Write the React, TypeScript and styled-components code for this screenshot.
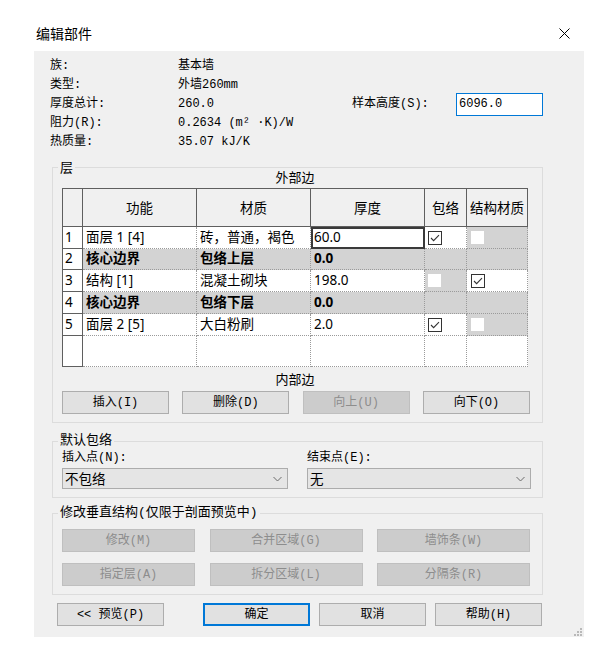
import React from "react";
import styled, { createGlobalStyle, css } from "styled-components";

const SONG = `"Liberation Mono", "Noto Sans CJK SC", monospace`;
const UI = `"Noto Sans", "Noto Sans CJK SC", sans-serif`;
const HEI = `"Noto Sans CJK SC", sans-serif`;

const GlobalStyle = createGlobalStyle`
  html, body {
    margin: 0;
    padding: 0;
    background: #fff;
  }
  body {
    font-family: ${HEI};
    color: #000;
  }
`;

type CheckState = "on" | "off";

interface Layer {
  n: number;
  fn: string;
  mat: string;
  thick: string;
  core?: boolean;
  wrap?: CheckState;
  struct?: CheckState;
  selected?: boolean;
}

const layers: Layer[] = [
  { n: 1, fn: "面层 1 [4]", mat: "砖，普通，褐色", thick: "60.0", wrap: "on", struct: "off", selected: true },
  { n: 2, fn: "核心边界", mat: "包络上层", thick: "0.0", core: true },
  { n: 3, fn: "结构 [1]", mat: "混凝土砌块", thick: "198.0", wrap: "off", struct: "on" },
  { n: 4, fn: "核心边界", mat: "包络下层", thick: "0.0", core: true },
  { n: 5, fn: "面层 2 [5]", mat: "大白粉刷", thick: "2.0", wrap: "on", struct: "off" },
];

const info = [
  { label: "族:", value: "基本墙" },
  { label: "类型:", value: "外墙260mm" },
  { label: "厚度总计:", value: "260.0", side: "样本高度(S):" },
  { label: "阻力(R):", value: "0.2634 (m² ·K)/W" },
  { label: "热质量:", value: "35.07 kJ/K" },
];

const Window = styled.div`
  width: 594px;
  height: 645px;
  background: #fff;
`;

const TitleBar = styled.div`
  height: 51px;
  box-sizing: border-box;
  display: flex;
  align-items: flex-end;
  justify-content: space-between;
  padding: 0 24px 9px 36px;
`;

const Title = styled.div`
  font: 14px/18px ${HEI};
`;

const CloseIcon = styled.svg`
  width: 11px;
  height: 11px;
  margin-bottom: 3px;
`;

const Panel = styled.div`
  position: relative;
  margin-left: 34px;
  width: 550px;
  height: 586px;
  box-sizing: border-box;
  background: #f0f0f0;
  padding: 6px 41px 0 18px;
  display: flex;
  flex-direction: column;
`;

const InfoGrid = styled.div`
  margin-left: -2px;
  display: grid;
  grid-template-columns: 128px 174px 104px 87px;
  grid-auto-rows: 19px;
  align-items: center;
  font: 12px/19px ${SONG};
`;

const InfoLabel = styled.div`
  grid-column: 1;
`;

const SideLabel = styled.div`
  grid-column: 3;
`;

const HeightField = styled.div`
  grid-column: 4;
  height: 23px;
  margin: -2px 0;
  box-sizing: border-box;
  border: 1px solid #0078d7;
  background: #fff;
  padding-left: 2px;
  line-height: 21px;
`;

const Group = styled.fieldset<{ $top: number }>`
  margin: ${(p) => p.$top}px 0 0;
  padding: 0;
  min-width: 0;
  border: 1px solid #dcdcdc;
`;

const Legend = styled.legend<{ $song?: boolean }>`
  margin-left: 5px;
  padding: 0 2px;
  font: ${(p) => (p.$song ? `13px/14px ${SONG}` : `13px/14px ${HEI}`)};
`;

const GroupBody = styled.div`
  padding: 0 0 8px 9px;
`;

const EdgeLabel = styled.div<{ $top: number }>`
  margin-top: ${(p) => p.$top}px;
  width: 466px;
  text-align: center;
  font: 13px/16px ${HEI};
`;

const Grid = styled.div`
  margin-top: 3px;
  width: 466px;
  box-sizing: border-box;
  display: grid;
  grid-template-columns: 20px 114px 114px 114px 42px 61px;
  grid-template-rows: 38px 22px 21px 22px 22px 22px 31px;
  border-top: 1px solid #5f5f5f;
  border-left: 1px solid #5f5f5f;
  background: #fff;
`;

const HeadCell = styled.div`
  box-sizing: border-box;
  background: #f0f0f0;
  border-right: 1px solid #5f5f5f;
  border-bottom: 1px solid #5f5f5f;
  display: flex;
  align-items: center;
  justify-content: center;
  font: 13.5px/1 ${HEI};
  white-space: nowrap;
`;

const RowHead = styled.div`
  box-sizing: border-box;
  background: #fff;
  border-right: 1px solid #5f5f5f;
  border-bottom: 1px solid #5f5f5f;
  display: flex;
  align-items: center;
  padding-left: 2px;
  font: 13.5px/1 ${UI};
`;

const Cell = styled.div<{ $gray?: boolean; $bold?: boolean; $selected?: boolean; $pad?: number }>`
  box-sizing: border-box;
  background: ${(p) => (p.$gray ? "#d3d3d3" : "#fff")};
  border-right: 1px dotted #9a9a9a;
  border-bottom: 1px dotted #9a9a9a;
  display: flex;
  align-items: center;
  padding-left: ${(p) => p.$pad ?? 3}px;
  font: ${(p) => (p.$bold ? 700 : 400)} 13.5px/1 ${UI};
  white-space: nowrap;
  overflow: hidden;
  ${(p) =>
    p.$selected &&
    css`
      outline: 2px solid #3a3a3a;
      outline-offset: -2px;
    `}
`;

const Box = styled.span<{ $on: boolean }>`
  box-sizing: border-box;
  width: ${(p) => (p.$on ? 14 : 13)}px;
  height: ${(p) => (p.$on ? 14 : 13)}px;
  background: #fff;
  border: ${(p) => (p.$on ? "1px solid #333" : "none")};
  display: flex;
  align-items: center;
  justify-content: center;
`;

const ButtonRow = styled.div`
  margin-top: 4px;
  width: 468px;
  display: flex;
  justify-content: space-between;
`;

const Button = styled.button<{ $w: number; $disabled?: boolean; $primary?: boolean }>`
  width: ${(p) => p.$w}px;
  height: 23px;
  box-sizing: border-box;
  margin: 0;
  padding: 0;
  border: 1px solid #adadad;
  background: #e1e1e1;
  color: #000;
  font: 12px/1 ${SONG};
  display: flex;
  align-items: center;
  justify-content: center;
  white-space: nowrap;
  ${(p) =>
    p.$disabled &&
    css`
      background: #cccccc;
      border-color: #bfbfbf;
      color: #8d8d8d;
    `}
  ${(p) =>
    p.$primary &&
    css`
      border-color: #0078d7;
      box-shadow: inset 0 0 0 1px #0078d7;
    `}
`;

const PickGrid = styled.div`
  display: grid;
  grid-template-columns: 226px 224px;
  column-gap: 19px;
`;

const PickLabel = styled.div`
  margin-top: 2px;
  font: 12px/16px ${SONG};
`;

const Select = styled.div`
  margin-top: 2px;
  height: 21px;
  box-sizing: border-box;
  border: 1px solid #acacac;
  background: #e5e5e5;
  display: flex;
  align-items: center;
  justify-content: space-between;
  padding: 0 5px 0 2px;
  font: 13.5px/1 ${HEI};
`;

const ToolGrid = styled.div`
  margin-top: 9px;
  display: grid;
  grid-template-columns: 133px 153px 153px;
  column-gap: 14.5px;
  row-gap: 11px;
`;

const Footer = styled.div`
  margin: 8px 1px 0 5px;
  display: flex;
  justify-content: space-between;
`;

const FooterRight = styled.div`
  display: flex;
  gap: 9px;
`;

const Grip = styled.svg`
  position: absolute;
  right: 2px;
  bottom: 1px;
  width: 10px;
  height: 10px;
`;

function Checkbox({ state }: { state: CheckState }) {
  return (
    <Box $on={state === "on"}>
      {state === "on" && (
        <svg width="12" height="12" viewBox="0 0 12 12">
          <polyline points="2,6 4.6,8.6 10,3.2" fill="none" stroke="#333" strokeWidth="1.1" />
        </svg>
      )}
    </Box>
  );
}

function Chevron() {
  return (
    <svg width="9" height="6" viewBox="0 0 9 6">
      <polyline points="0.5,1 4.5,5 8.5,1" fill="none" stroke="#6a6a6a" strokeWidth="1" />
    </svg>
  );
}

export default function App() {
  return (
    <Window>
      <GlobalStyle />
      <TitleBar>
        <Title>编辑部件</Title>
        <CloseIcon viewBox="0 0 11 11">
          <path d="M0.5 0.5 L10.5 10.5 M10.5 0.5 L0.5 10.5" stroke="#000" strokeWidth="1" />
        </CloseIcon>
      </TitleBar>

      <Panel>
        <InfoGrid>
          {info.map((row) => (
            <React.Fragment key={row.label}>
              <InfoLabel>{row.label}</InfoLabel>
              <div>{row.value}</div>
              {row.side && (
                <>
                  <SideLabel>{row.side}</SideLabel>
                  <HeightField>6096.0</HeightField>
                </>
              )}
            </React.Fragment>
          ))}
        </InfoGrid>

        <Group $top={8}>
          <Legend>层</Legend>
          <GroupBody>
            <EdgeLabel $top={-5}>外部边</EdgeLabel>
            <Grid>
              <HeadCell />
              <HeadCell>功能</HeadCell>
              <HeadCell>材质</HeadCell>
              <HeadCell>厚度</HeadCell>
              <HeadCell>包络</HeadCell>
              <HeadCell>结构材质</HeadCell>
              {layers.map((l) => (
                <React.Fragment key={l.n}>
                  <RowHead>{l.n}</RowHead>
                  <Cell $gray={l.core} $bold={l.core}>{l.fn}</Cell>
                  <Cell $gray={l.core} $bold={l.core}>{l.mat}</Cell>
                  <Cell $gray={l.core} $bold={l.core} $selected={l.selected}>{l.thick}</Cell>
                  <Cell $gray={l.core || l.wrap === "off"} $pad={3}>
                    {l.wrap && <Checkbox state={l.wrap} />}
                  </Cell>
                  <Cell $gray={l.core || l.struct === "off"} $pad={4}>
                    {l.struct && <Checkbox state={l.struct} />}
                  </Cell>
                </React.Fragment>
              ))}
              <RowHead />
              <Cell />
              <Cell />
              <Cell />
              <Cell />
              <Cell />
            </Grid>
            <EdgeLabel $top={4}>内部边</EdgeLabel>
            <ButtonRow>
              <Button $w={107}>插入(I)</Button>
              <Button $w={107}>删除(D)</Button>
              <Button $w={107} $disabled>向上(U)</Button>
              <Button $w={107}>向下(O)</Button>
            </ButtonRow>
          </GroupBody>
        </Group>

        <Group $top={11}>
          <Legend $song>默认包络</Legend>
          <GroupBody>
            <PickGrid>
              <div>
                <PickLabel>插入点(N):</PickLabel>
                <Select>
                  不包络
                  <Chevron />
                </Select>
              </div>
              <div>
                <PickLabel>结束点(E):</PickLabel>
                <Select>
                  无
                  <Chevron />
                </Select>
              </div>
            </PickGrid>
          </GroupBody>
        </Group>

        <Group $top={8}>
          <Legend $song>修改垂直结构(仅限于剖面预览中)</Legend>
          <GroupBody>
            <ToolGrid>
              <Button $w={133} $disabled>修改(M)</Button>
              <Button $w={153} $disabled>合并区域(G)</Button>
              <Button $w={153} $disabled>墙饰条(W)</Button>
              <Button $w={133} $disabled>指定层(A)</Button>
              <Button $w={153} $disabled>拆分区域(L)</Button>
              <Button $w={153} $disabled>分隔条(R)</Button>
            </ToolGrid>
          </GroupBody>
        </Group>

        <Footer>
          <Button $w={107}>&lt;&lt; 预览(P)</Button>
          <FooterRight>
            <Button $w={107} $primary>确定</Button>
            <Button $w={107}>取消</Button>
            <Button $w={107}>帮助(H)</Button>
          </FooterRight>
        </Footer>

        <Grip viewBox="0 0 10 10">
          <rect x="8" y="2" width="2" height="2" fill="#b9b9b9" />
          <rect x="5" y="5" width="2" height="2" fill="#b9b9b9" />
          <rect x="8" y="5" width="2" height="2" fill="#b9b9b9" />
          <rect x="2" y="8" width="2" height="2" fill="#b9b9b9" />
          <rect x="5" y="8" width="2" height="2" fill="#b9b9b9" />
          <rect x="8" y="8" width="2" height="2" fill="#b9b9b9" />
        </Grip>
      </Panel>
    </Window>
  );
}
